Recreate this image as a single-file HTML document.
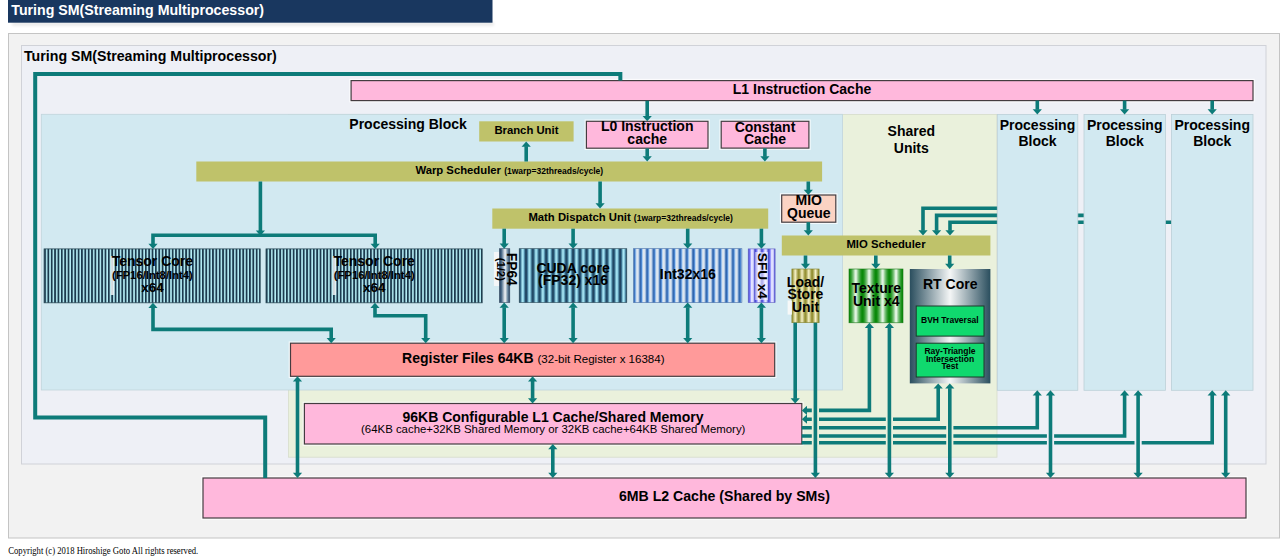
<!DOCTYPE html>
<html><head><meta charset="utf-8"><title>Turing SM</title>
<style>
html,body{margin:0;padding:0;background:#fff;width:1280px;height:558px;overflow:hidden;font-family:"Liberation Sans",sans-serif;}
svg{position:absolute;left:0;top:0;display:block;}
</style></head><body>
<svg width="1280" height="558" viewBox="0 0 1280 558">
<defs>
<pattern id="tensor" patternUnits="userSpaceOnUse" x="44.1" y="0" width="3.36" height="10">
  <rect width="3.36" height="10" fill="#b6eef6"/><rect width="1.8" height="10" fill="#1c3a4e"/>
</pattern>
<linearGradient id="fp64" x1="0" x2="1" y1="0" y2="0">
  <stop offset="0" stop-color="#1e3858"/><stop offset="0.2" stop-color="#4a6a88"/><stop offset="0.55" stop-color="#f4f6f8"/><stop offset="0.8" stop-color="#6a88a0"/><stop offset="1" stop-color="#1e3858"/>
</linearGradient>
<linearGradient id="cudaS" x1="0" x2="1" y1="0" y2="0">
  <stop offset="0" stop-color="#16304a"/><stop offset="0.2" stop-color="#336a8a"/><stop offset="0.45" stop-color="#aeecf8"/><stop offset="0.6" stop-color="#a0e2f2"/><stop offset="0.85" stop-color="#346c8c"/><stop offset="1" stop-color="#16304a"/>
</linearGradient>
<pattern id="cuda" patternUnits="userSpaceOnUse" x="519.2" y="0" width="6.725" height="10">
  <rect width="6.725" height="10" fill="url(#cudaS)"/>
</pattern>
<linearGradient id="intS" x1="0" x2="1" y1="0" y2="0">
  <stop offset="0" stop-color="#285aa0"/><stop offset="0.18" stop-color="#3a76c6"/><stop offset="0.3" stop-color="#80b8f4"/><stop offset="0.42" stop-color="#e0e8f0"/><stop offset="0.72" stop-color="#dde5ee"/><stop offset="0.86" stop-color="#7aa4d8"/><stop offset="1" stop-color="#285aa0"/>
</linearGradient>
<pattern id="int32" patternUnits="userSpaceOnUse" x="633.6" y="0" width="6.6" height="10">
  <rect width="6.6" height="10" fill="url(#intS)"/>
</pattern>
<linearGradient id="sfuS" x1="0" x2="1" y1="0" y2="0">
  <stop offset="0" stop-color="#3838b8"/><stop offset="0.2" stop-color="#6a6af0"/><stop offset="0.35" stop-color="#a0a0ff"/><stop offset="0.5" stop-color="#e8e8ff"/><stop offset="0.75" stop-color="#d8d8ff"/><stop offset="0.9" stop-color="#7a7ae8"/><stop offset="1" stop-color="#3838b8"/>
</linearGradient>
<pattern id="sfu" patternUnits="userSpaceOnUse" x="748.2" y="0" width="6.7" height="10">
  <rect width="6.7" height="10" fill="url(#sfuS)"/>
</pattern>
<linearGradient id="loadS" x1="0" x2="1" y1="0" y2="0">
  <stop offset="0" stop-color="#86821e"/><stop offset="0.5" stop-color="#f6f2c8"/><stop offset="1" stop-color="#86821e"/>
</linearGradient>
<pattern id="load" patternUnits="userSpaceOnUse" x="791.9" y="0" width="6.75" height="10">
  <rect width="6.75" height="10" fill="url(#loadS)"/>
</pattern>
<linearGradient id="texS" x1="0" x2="1" y1="0" y2="0">
  <stop offset="0" stop-color="#008400"/><stop offset="0.15" stop-color="#2a9a2a"/><stop offset="0.32" stop-color="#80c480"/><stop offset="0.5" stop-color="#f8fff8"/><stop offset="0.68" stop-color="#80c480"/><stop offset="0.85" stop-color="#2a9a2a"/><stop offset="1" stop-color="#008400"/>
</linearGradient>
<pattern id="tex" patternUnits="userSpaceOnUse" x="849" y="0" width="13.45" height="10">
  <rect width="13.45" height="10" fill="url(#texS)"/>
</pattern>
<linearGradient id="rt" x1="0" x2="1" y1="0" y2="0">
  <stop offset="0" stop-color="#2a4e5e"/><stop offset="0.5" stop-color="#f4f6f6"/><stop offset="1" stop-color="#2a4e5e"/>
</linearGradient>
<filter id="shadow" x="-5%" y="-50%" width="110%" height="200%"><feGaussianBlur stdDeviation="1.5"/></filter>
</defs>
<rect x="12" y="22" width="482" height="4" fill="#000" opacity="0.08" filter="url(#shadow)"/>
<rect x="8" y="0" width="484.50" height="22.70" fill="#19375f" />
<rect x="8.5" y="33.5" width="1271.00" height="504.50" fill="#f2f2f2" stroke="#c4c4c4" stroke-width="1" />
<rect x="21.5" y="45.5" width="1244.50" height="418.50" fill="#eef0f6" stroke="#d0d2d8" stroke-width="1" />
<rect x="288.5" y="114.4" width="708.50" height="342.80" fill="#eaf1dc" stroke="#d6dccb" stroke-width="0.8" />
<rect x="41.3" y="114.3" width="801.20" height="275.70" fill="#d2e9f1" stroke="#c0d4dc" stroke-width="0.8" />
<path d="M1060.00 208.30 L923.00 208.30 L923.00 230.70" fill="none" stroke="#0d7b79" stroke-width="3.6" stroke-linejoin="miter" stroke-linecap="butt"/>
<polygon points="918.40,230.20 927.60,230.20 923.00,235.40" fill="#0d7b79"/>
<path d="M1150.00 215.40 L936.60 215.40 L936.60 230.70" fill="none" stroke="#0d7b79" stroke-width="3.6" stroke-linejoin="miter" stroke-linecap="butt"/>
<polygon points="932.00,230.20 941.20,230.20 936.60,235.40" fill="#0d7b79"/>
<path d="M1240.00 222.30 L950.00 222.30 L950.00 230.70" fill="none" stroke="#0d7b79" stroke-width="3.6" stroke-linejoin="miter" stroke-linecap="butt"/>
<polygon points="945.40,230.20 954.60,230.20 950.00,235.40" fill="#0d7b79"/>
<rect x="997.3" y="114.4" width="80.50" height="275.90" fill="#d2e9f1" stroke="#bcd0d8" stroke-width="0.8" />
<rect x="1084" y="114.4" width="81.40" height="275.90" fill="#d2e9f1" stroke="#bcd0d8" stroke-width="0.8" />
<rect x="1171.4" y="114.4" width="81.60" height="275.90" fill="#d2e9f1" stroke="#bcd0d8" stroke-width="0.8" />
<rect x="351.1" y="80.6" width="901.90" height="20.00" fill="none" stroke="#fff" stroke-opacity="0.75" stroke-width="3.5999999999999996"/>
<rect x="351.1" y="80.6" width="901.90" height="20.00" fill="#ffb8dc" stroke="#443c40" stroke-width="1.2" />
<rect x="479.2" y="121.3" width="94.40" height="20.20" fill="#bfc26a" />
<rect x="586.4" y="121.3" width="121.60" height="26.90" fill="none" stroke="#fff" stroke-opacity="0.75" stroke-width="3.5999999999999996"/>
<rect x="586.4" y="121.3" width="121.60" height="26.90" fill="#ffb8dc" stroke="#443c40" stroke-width="1.2" />
<rect x="721.2" y="121.3" width="87.70" height="26.80" fill="none" stroke="#fff" stroke-opacity="0.75" stroke-width="3.5999999999999996"/>
<rect x="721.2" y="121.3" width="87.70" height="26.80" fill="#ffb8dc" stroke="#443c40" stroke-width="1.2" />
<rect x="196.3" y="161.5" width="625.80" height="20.00" fill="#bfc26a" />
<rect x="781.7" y="195" width="54.10" height="27.20" fill="none" stroke="#fff" stroke-opacity="0.75" stroke-width="3.5999999999999996"/>
<rect x="781.7" y="195" width="54.10" height="27.20" fill="#fbd3c3" stroke="#443c40" stroke-width="1.2" />
<rect x="492.3" y="208.5" width="275.90" height="20.20" fill="#bfc26a" />
<rect x="781.8" y="235.5" width="208.60" height="20.00" fill="#bfc26a" />
<rect x="44.1" y="248.9" width="216.10" height="53.90" fill="url(#tensor)" stroke="#2a4a58" stroke-width="0.8" />
<rect x="266" y="248.9" width="216.20" height="53.90" fill="url(#tensor)" stroke="#2a4a58" stroke-width="0.8" />
<rect x="493.9" y="252" width="5.60" height="34.00" fill="#f4f6f8" />
<rect x="499.4" y="248.7" width="10.40" height="53.90" fill="url(#fp64)" stroke="#3a5068" stroke-width="0.6" />
<rect x="519.2" y="248.7" width="107.60" height="53.90" fill="url(#cuda)" stroke="#2a4a58" stroke-width="0.6" />
<rect x="633.6" y="248.7" width="108.30" height="53.90" fill="url(#int32)" stroke="#4a70a8" stroke-width="0.6" />
<rect x="748.2" y="248.9" width="26.90" height="53.70" fill="url(#sfu)" stroke="#6060c0" stroke-width="0.6" />
<rect x="791.9" y="269" width="27.20" height="53.70" fill="url(#load)" stroke="#80802a" stroke-width="0.6" />
<rect x="849" y="269" width="54.00" height="53.80" fill="url(#tex)" stroke="#1a7a1a" stroke-width="0.6" />
<rect x="909.8" y="269" width="80.60" height="114.40" fill="url(#rt)" />
<rect x="110.7" y="256" width="3.50" height="39.00" fill="#f0f4f6" opacity="0.85"/>
<rect x="332.6" y="256" width="3.50" height="39.00" fill="#f0f4f6" opacity="0.85"/>
<rect x="755.2" y="252" width="12.80" height="48.00" fill="#ffffff" opacity="0.55"/>
<rect x="787.6" y="300.5" width="4.30" height="14.10" fill="#f6f8f8" />
<rect x="916.2" y="306" width="67.80" height="30.10" fill="#10d96e" stroke="#1a3a2a" stroke-width="1.0" />
<rect x="916.2" y="343.2" width="67.80" height="33.80" fill="#10d96e" stroke="#1a3a2a" stroke-width="1.0" />
<rect x="290.5" y="343.2" width="484.20" height="33.10" fill="none" stroke="#fff" stroke-opacity="0.75" stroke-width="3.5999999999999996"/>
<rect x="290.5" y="343.2" width="484.20" height="33.10" fill="#ff9a9a" stroke="#443c40" stroke-width="1.2" />
<rect x="304.4" y="403.5" width="497.40" height="40.50" fill="none" stroke="#fff" stroke-opacity="0.75" stroke-width="3.5999999999999996"/>
<rect x="304.4" y="403.5" width="497.40" height="40.50" fill="#ffb8dc" stroke="#443c40" stroke-width="1.2" />
<rect x="203" y="478" width="1043.00" height="40.00" fill="none" stroke="#fff" stroke-opacity="0.75" stroke-width="3.5999999999999996"/>
<rect x="203" y="478" width="1043.00" height="40.00" fill="#ffb8dc" stroke="#443c40" stroke-width="1.2" />
<path d="M265.20 478.00 L265.20 417.40 L35.20 417.40 L35.20 74.10 L620.35 74.10 L620.35 80.60" fill="none" stroke="#0d7b79" stroke-width="4.0" stroke-linejoin="miter" stroke-linecap="butt"/>
<path d="M647.20 100.80 L647.20 116.60" fill="none" stroke="#0d7b79" stroke-width="3.6" stroke-linejoin="miter" stroke-linecap="butt"/>
<polygon points="642.60,116.10 651.80,116.10 647.20,121.30" fill="#0d7b79"/>
<path d="M647.20 148.40 L647.20 156.80" fill="none" stroke="#0d7b79" stroke-width="3.6" stroke-linejoin="miter" stroke-linecap="butt"/>
<polygon points="642.60,156.30 651.80,156.30 647.20,161.50" fill="#0d7b79"/>
<path d="M764.90 148.30 L764.90 156.80" fill="none" stroke="#0d7b79" stroke-width="3.6" stroke-linejoin="miter" stroke-linecap="butt"/>
<polygon points="760.30,156.30 769.50,156.30 764.90,161.50" fill="#0d7b79"/>
<path d="M526.20 161.50 L526.20 146.20" fill="none" stroke="#0d7b79" stroke-width="3.6" stroke-linejoin="miter" stroke-linecap="butt"/>
<polygon points="521.60,146.70 530.80,146.70 526.20,141.50" fill="#0d7b79"/>
<path d="M808.30 181.50 L808.30 190.30" fill="none" stroke="#0d7b79" stroke-width="3.6" stroke-linejoin="miter" stroke-linecap="butt"/>
<polygon points="803.70,189.80 812.90,189.80 808.30,195.00" fill="#0d7b79"/>
<path d="M600.10 181.50 L600.10 203.80" fill="none" stroke="#0d7b79" stroke-width="3.6" stroke-linejoin="miter" stroke-linecap="butt"/>
<polygon points="595.50,203.30 604.70,203.30 600.10,208.50" fill="#0d7b79"/>
<path d="M260.40 181.50 L260.40 231.10" fill="none" stroke="#0d7b79" stroke-width="3.6" stroke-linejoin="miter" stroke-linecap="butt"/>
<polygon points="255.80,230.60 265.00,230.60 260.40,235.80" fill="#0d7b79"/>
<path d="M153.00 244.20 L153.00 235.30 L375.20 235.30 L375.20 244.20" fill="none" stroke="#0d7b79" stroke-width="3.6" stroke-linejoin="miter" stroke-linecap="butt"/>
<polygon points="148.40,243.70 157.60,243.70 153.00,248.90" fill="#0d7b79"/>
<polygon points="370.60,243.70 379.80,243.70 375.20,248.90" fill="#0d7b79"/>
<path d="M504.20 228.70 L504.20 244.00" fill="none" stroke="#0d7b79" stroke-width="3.6" stroke-linejoin="miter" stroke-linecap="butt"/>
<polygon points="499.60,243.50 508.80,243.50 504.20,248.70" fill="#0d7b79"/>
<path d="M504.20 307.30 L504.20 338.50" fill="none" stroke="#0d7b79" stroke-width="3.6" stroke-linejoin="miter" stroke-linecap="butt"/>
<polygon points="499.60,338.00 508.80,338.00 504.20,343.20" fill="#0d7b79"/>
<polygon points="499.60,307.80 508.80,307.80 504.20,302.60" fill="#0d7b79"/>
<path d="M573.10 228.70 L573.10 244.00" fill="none" stroke="#0d7b79" stroke-width="3.6" stroke-linejoin="miter" stroke-linecap="butt"/>
<polygon points="568.50,243.50 577.70,243.50 573.10,248.70" fill="#0d7b79"/>
<path d="M573.10 307.30 L573.10 338.50" fill="none" stroke="#0d7b79" stroke-width="3.6" stroke-linejoin="miter" stroke-linecap="butt"/>
<polygon points="568.50,338.00 577.70,338.00 573.10,343.20" fill="#0d7b79"/>
<polygon points="568.50,307.80 577.70,307.80 573.10,302.60" fill="#0d7b79"/>
<path d="M687.70 228.70 L687.70 244.00" fill="none" stroke="#0d7b79" stroke-width="3.6" stroke-linejoin="miter" stroke-linecap="butt"/>
<polygon points="683.10,243.50 692.30,243.50 687.70,248.70" fill="#0d7b79"/>
<path d="M687.70 307.30 L687.70 338.50" fill="none" stroke="#0d7b79" stroke-width="3.6" stroke-linejoin="miter" stroke-linecap="butt"/>
<polygon points="683.10,338.00 692.30,338.00 687.70,343.20" fill="#0d7b79"/>
<polygon points="683.10,307.80 692.30,307.80 687.70,302.60" fill="#0d7b79"/>
<path d="M761.40 228.70 L761.40 244.00" fill="none" stroke="#0d7b79" stroke-width="3.6" stroke-linejoin="miter" stroke-linecap="butt"/>
<polygon points="756.80,243.50 766.00,243.50 761.40,248.70" fill="#0d7b79"/>
<path d="M761.40 307.30 L761.40 338.50" fill="none" stroke="#0d7b79" stroke-width="3.6" stroke-linejoin="miter" stroke-linecap="butt"/>
<polygon points="756.80,338.00 766.00,338.00 761.40,343.20" fill="#0d7b79"/>
<polygon points="756.80,307.80 766.00,307.80 761.40,302.60" fill="#0d7b79"/>
<path d="M808.30 222.20 L808.30 230.80" fill="none" stroke="#0d7b79" stroke-width="3.6" stroke-linejoin="miter" stroke-linecap="butt"/>
<polygon points="803.70,230.30 812.90,230.30 808.30,235.50" fill="#0d7b79"/>
<path d="M805.50 255.50 L805.50 264.30" fill="none" stroke="#0d7b79" stroke-width="3.6" stroke-linejoin="miter" stroke-linecap="butt"/>
<polygon points="800.90,263.80 810.10,263.80 805.50,269.00" fill="#0d7b79"/>
<path d="M875.80 255.50 L875.80 264.30" fill="none" stroke="#0d7b79" stroke-width="3.6" stroke-linejoin="miter" stroke-linecap="butt"/>
<polygon points="871.20,263.80 880.40,263.80 875.80,269.00" fill="#0d7b79"/>
<path d="M949.70 255.50 L949.70 264.30" fill="none" stroke="#0d7b79" stroke-width="3.6" stroke-linejoin="miter" stroke-linecap="butt"/>
<polygon points="945.10,263.80 954.30,263.80 949.70,269.00" fill="#0d7b79"/>
<path d="M153.00 307.50 L153.00 329.40 L331.20 329.40 L331.20 338.50" fill="none" stroke="#0d7b79" stroke-width="3.6" stroke-linejoin="miter" stroke-linecap="butt"/>
<polygon points="326.60,338.00 335.80,338.00 331.20,343.20" fill="#0d7b79"/>
<polygon points="148.40,308.00 157.60,308.00 153.00,302.80" fill="#0d7b79"/>
<path d="M375.00 307.50 L375.00 315.80 L425.70 315.80 L425.70 338.50" fill="none" stroke="#0d7b79" stroke-width="3.6" stroke-linejoin="miter" stroke-linecap="butt"/>
<polygon points="421.10,338.00 430.30,338.00 425.70,343.20" fill="#0d7b79"/>
<polygon points="370.40,308.00 379.60,308.00 375.00,302.80" fill="#0d7b79"/>
<path d="M297.50 381.00 L297.50 473.30" fill="none" stroke="#0d7b79" stroke-width="3.6" stroke-linejoin="miter" stroke-linecap="butt"/>
<polygon points="292.90,472.80 302.10,472.80 297.50,478.00" fill="#0d7b79"/>
<polygon points="292.90,381.50 302.10,381.50 297.50,376.30" fill="#0d7b79"/>
<path d="M532.60 381.00 L532.60 398.80" fill="none" stroke="#0d7b79" stroke-width="3.6" stroke-linejoin="miter" stroke-linecap="butt"/>
<polygon points="528.00,398.30 537.20,398.30 532.60,403.50" fill="#0d7b79"/>
<polygon points="528.00,381.50 537.20,381.50 532.60,376.30" fill="#0d7b79"/>
<path d="M552.80 448.70 L552.80 473.30" fill="none" stroke="#0d7b79" stroke-width="3.6" stroke-linejoin="miter" stroke-linecap="butt"/>
<polygon points="548.20,472.80 557.40,472.80 552.80,478.00" fill="#0d7b79"/>
<polygon points="548.20,449.20 557.40,449.20 552.80,444.00" fill="#0d7b79"/>
<path d="M795.20 322.70 L795.20 398.80" fill="none" stroke="#0d7b79" stroke-width="3.6" stroke-linejoin="miter" stroke-linecap="butt"/>
<polygon points="790.60,398.30 799.80,398.30 795.20,403.50" fill="#0d7b79"/>
<path d="M869.40 327.50 L869.40 410.40 L806.50 410.40" fill="none" stroke="#0d7b79" stroke-width="3.6" stroke-linejoin="miter" stroke-linecap="butt"/>
<polygon points="807.00,405.80 807.00,415.00 801.80,410.40" fill="#0d7b79"/>
<polygon points="864.80,328.00 874.00,328.00 869.40,322.80" fill="#0d7b79"/>
<path d="M938.20 388.10 L938.20 419.20 L806.50 419.20" fill="none" stroke="#0d7b79" stroke-width="3.6" stroke-linejoin="miter" stroke-linecap="butt"/>
<polygon points="807.00,414.60 807.00,423.80 801.80,419.20" fill="#0d7b79"/>
<polygon points="933.60,388.60 942.80,388.60 938.20,383.40" fill="#0d7b79"/>
<path d="M801.80 427.80 L1037.30 427.80 L1037.30 395.00" fill="none" stroke="#0d7b79" stroke-width="3.6" stroke-linejoin="miter" stroke-linecap="butt"/>
<polygon points="1032.70,395.50 1041.90,395.50 1037.30,390.30" fill="#0d7b79"/>
<path d="M801.80 436.00 L1124.60 436.00 L1124.60 395.00" fill="none" stroke="#0d7b79" stroke-width="3.6" stroke-linejoin="miter" stroke-linecap="butt"/>
<polygon points="1120.00,395.50 1129.20,395.50 1124.60,390.30" fill="#0d7b79"/>
<path d="M801.80 442.70 L1212.20 442.70 L1212.20 395.00" fill="none" stroke="#0d7b79" stroke-width="3.6" stroke-linejoin="miter" stroke-linecap="butt"/>
<polygon points="1207.60,395.50 1216.80,395.50 1212.20,390.30" fill="#0d7b79"/>
<rect x="811.8" y="407.79999999999995" width="7.20" height="5.20" fill="#eaf1dc" />
<rect x="811.8" y="416.59999999999997" width="7.20" height="5.20" fill="#eaf1dc" />
<rect x="811.8" y="425.2" width="7.20" height="5.20" fill="#eaf1dc" />
<rect x="811.8" y="433.4" width="7.20" height="5.20" fill="#eaf1dc" />
<rect x="811.8" y="440.09999999999997" width="7.20" height="5.20" fill="#eaf1dc" />
<rect x="885.8" y="416.59999999999997" width="7.20" height="5.20" fill="#eaf1dc" />
<rect x="885.8" y="425.2" width="7.20" height="5.20" fill="#eaf1dc" />
<rect x="885.8" y="433.4" width="7.20" height="5.20" fill="#eaf1dc" />
<rect x="885.8" y="440.09999999999997" width="7.20" height="5.20" fill="#eaf1dc" />
<rect x="946.1999999999999" y="425.2" width="7.20" height="5.20" fill="#eaf1dc" />
<rect x="946.1999999999999" y="433.4" width="7.20" height="5.20" fill="#eaf1dc" />
<rect x="946.1999999999999" y="440.09999999999997" width="7.20" height="5.20" fill="#eaf1dc" />
<rect x="1046.9" y="433.4" width="7.20" height="5.20" fill="#eef0f6" />
<rect x="1046.9" y="440.09999999999997" width="7.20" height="5.20" fill="#eef0f6" />
<rect x="1134.5" y="440.09999999999997" width="7.20" height="5.20" fill="#eef0f6" />
<path d="M815.40 322.70 L815.40 473.30" fill="none" stroke="#0d7b79" stroke-width="3.6" stroke-linejoin="miter" stroke-linecap="butt"/>
<polygon points="810.80,472.80 820.00,472.80 815.40,478.00" fill="#0d7b79"/>
<path d="M889.40 327.50 L889.40 473.30" fill="none" stroke="#0d7b79" stroke-width="3.6" stroke-linejoin="miter" stroke-linecap="butt"/>
<polygon points="884.80,472.80 894.00,472.80 889.40,478.00" fill="#0d7b79"/>
<polygon points="884.80,328.00 894.00,328.00 889.40,322.80" fill="#0d7b79"/>
<path d="M949.80 388.10 L949.80 473.30" fill="none" stroke="#0d7b79" stroke-width="3.6" stroke-linejoin="miter" stroke-linecap="butt"/>
<polygon points="945.20,472.80 954.40,472.80 949.80,478.00" fill="#0d7b79"/>
<polygon points="945.20,388.60 954.40,388.60 949.80,383.40" fill="#0d7b79"/>
<path d="M1050.50 395.00 L1050.50 473.30" fill="none" stroke="#0d7b79" stroke-width="3.6" stroke-linejoin="miter" stroke-linecap="butt"/>
<polygon points="1045.90,472.80 1055.10,472.80 1050.50,478.00" fill="#0d7b79"/>
<polygon points="1045.90,395.50 1055.10,395.50 1050.50,390.30" fill="#0d7b79"/>
<path d="M1138.10 395.00 L1138.10 473.30" fill="none" stroke="#0d7b79" stroke-width="3.6" stroke-linejoin="miter" stroke-linecap="butt"/>
<polygon points="1133.50,472.80 1142.70,472.80 1138.10,478.00" fill="#0d7b79"/>
<polygon points="1133.50,395.50 1142.70,395.50 1138.10,390.30" fill="#0d7b79"/>
<path d="M1225.70 395.00 L1225.70 473.30" fill="none" stroke="#0d7b79" stroke-width="3.6" stroke-linejoin="miter" stroke-linecap="butt"/>
<polygon points="1221.10,472.80 1230.30,472.80 1225.70,478.00" fill="#0d7b79"/>
<polygon points="1221.10,395.50 1230.30,395.50 1225.70,390.30" fill="#0d7b79"/>
<path d="M1037.30 100.60 L1037.30 109.70" fill="none" stroke="#0d7b79" stroke-width="3.6" stroke-linejoin="miter" stroke-linecap="butt"/>
<polygon points="1032.70,109.20 1041.90,109.20 1037.30,114.40" fill="#0d7b79"/>
<path d="M1124.60 100.60 L1124.60 109.70" fill="none" stroke="#0d7b79" stroke-width="3.6" stroke-linejoin="miter" stroke-linecap="butt"/>
<polygon points="1120.00,109.20 1129.20,109.20 1124.60,114.40" fill="#0d7b79"/>
<path d="M1212.20 100.60 L1212.20 109.70" fill="none" stroke="#0d7b79" stroke-width="3.6" stroke-linejoin="miter" stroke-linecap="butt"/>
<polygon points="1207.60,109.20 1216.80,109.20 1212.20,114.40" fill="#0d7b79"/>
<text x="11.3" y="14.8" font-size="14.2" font-weight="bold" text-anchor="start" fill="#fff" font-family='"Liberation Sans", sans-serif' >Turing SM(Streaming Multiprocessor)</text>
<text x="24" y="61.2" font-size="14.2" font-weight="bold" text-anchor="start" fill="#000" font-family='"Liberation Sans", sans-serif' >Turing SM(Streaming Multiprocessor)</text>
<text x="802" y="94.1" font-size="14" font-weight="bold" text-anchor="middle" fill="#000" font-family='"Liberation Sans", sans-serif' >L1 Instruction Cache</text>
<text x="349.3" y="129" font-size="14" font-weight="bold" text-anchor="start" fill="#000" font-family='"Liberation Sans", sans-serif' >Processing Block</text>
<text x="526.4" y="133.5" font-size="11.3" font-weight="bold" text-anchor="middle" fill="#000" font-family='"Liberation Sans", sans-serif' >Branch Unit</text>
<text x="647.2" y="131.4" font-size="14" font-weight="bold" text-anchor="middle" fill="#000" font-family='"Liberation Sans", sans-serif' >L0 Instruction</text>
<text x="647.2" y="143.9" font-size="14" font-weight="bold" text-anchor="middle" fill="#000" font-family='"Liberation Sans", sans-serif' >cache</text>
<text x="765" y="131.5" font-size="14" font-weight="bold" text-anchor="middle" fill="#000" font-family='"Liberation Sans", sans-serif' >Constant</text>
<text x="765" y="143.9" font-size="14" font-weight="bold" text-anchor="middle" fill="#000" font-family='"Liberation Sans", sans-serif' >Cache</text>
<text x="911.3" y="136" font-size="14" font-weight="bold" text-anchor="middle" fill="#000" font-family='"Liberation Sans", sans-serif' >Shared</text>
<text x="911.3" y="152.9" font-size="14" font-weight="bold" text-anchor="middle" fill="#000" font-family='"Liberation Sans", sans-serif' >Units</text>
<text x="1037.5" y="129.9" font-size="14" font-weight="bold" text-anchor="middle" fill="#000" font-family='"Liberation Sans", sans-serif' >Processing</text>
<text x="1037.5" y="146.3" font-size="14" font-weight="bold" text-anchor="middle" fill="#000" font-family='"Liberation Sans", sans-serif' >Block</text>
<text x="1124.7" y="129.9" font-size="14" font-weight="bold" text-anchor="middle" fill="#000" font-family='"Liberation Sans", sans-serif' >Processing</text>
<text x="1124.7" y="146.3" font-size="14" font-weight="bold" text-anchor="middle" fill="#000" font-family='"Liberation Sans", sans-serif' >Block</text>
<text x="1212.2" y="129.9" font-size="14" font-weight="bold" text-anchor="middle" fill="#000" font-family='"Liberation Sans", sans-serif' >Processing</text>
<text x="1212.2" y="146.3" font-size="14" font-weight="bold" text-anchor="middle" fill="#000" font-family='"Liberation Sans", sans-serif' >Block</text>
<text x="415.4" y="174.3" font-family='"Liberation Sans", sans-serif' font-weight="bold" font-size="11.3">Warp Scheduler <tspan font-size="8.5">(1warp=32threads/cycle)</tspan></text>
<text x="808.8" y="205.1" font-size="14" font-weight="bold" text-anchor="middle" fill="#000" font-family='"Liberation Sans", sans-serif' >MIO</text>
<text x="808.8" y="217.7" font-size="14" font-weight="bold" text-anchor="middle" fill="#000" font-family='"Liberation Sans", sans-serif' >Queue</text>
<text x="528.4" y="221" font-family='"Liberation Sans", sans-serif' font-weight="bold" font-size="11.3">Math Dispatch Unit <tspan font-size="8.5">(1warp=32threads/cycle)</tspan></text>
<text x="886" y="248" font-size="11.3" font-weight="bold" text-anchor="middle" fill="#000" font-family='"Liberation Sans", sans-serif' >MIO Scheduler</text>
<text x="152.4" y="265.8" font-size="14" font-weight="bold" text-anchor="middle" fill="#000" font-family='"Liberation Sans", sans-serif' >Tensor Core</text>
<text x="152.4" y="279.2" font-size="11.3" font-weight="bold" text-anchor="middle" fill="#000" font-family='"Liberation Sans", sans-serif' >(FP16/Int8/Int4)</text>
<text x="152.4" y="291.8" font-size="13.5" font-weight="bold" text-anchor="middle" fill="#000" font-family='"Liberation Sans", sans-serif' >x64</text>
<text x="374.2" y="265.8" font-size="14" font-weight="bold" text-anchor="middle" fill="#000" font-family='"Liberation Sans", sans-serif' >Tensor Core</text>
<text x="374.2" y="279.2" font-size="11.3" font-weight="bold" text-anchor="middle" fill="#000" font-family='"Liberation Sans", sans-serif' >(FP16/Int8/Int4)</text>
<text x="374.2" y="291.8" font-size="13.5" font-weight="bold" text-anchor="middle" fill="#000" font-family='"Liberation Sans", sans-serif' >x64</text>
<text x="507.4" y="269.3" font-size="13.8" font-weight="bold" text-anchor="middle" fill="#000" font-family='"Liberation Sans", sans-serif' transform="rotate(90 507.4 269.3)">FP64</text>
<text x="497" y="269.3" font-size="11.3" font-weight="bold" text-anchor="middle" fill="#000" font-family='"Liberation Sans", sans-serif' transform="rotate(90 497 269.3)">(1/2)</text>
<text x="573.1" y="272.5" font-size="14" font-weight="bold" text-anchor="middle" fill="#000" font-family='"Liberation Sans", sans-serif' >CUDA core</text>
<text x="573.1" y="285.2" font-size="14" font-weight="bold" text-anchor="middle" fill="#000" font-family='"Liberation Sans", sans-serif' >(FP32) x16</text>
<text x="687.8" y="278.7" font-size="14" font-weight="bold" text-anchor="middle" fill="#000" font-family='"Liberation Sans", sans-serif' >Int32x16</text>
<text x="757.7" y="275.9" font-size="13.6" font-weight="bold" text-anchor="middle" fill="#000" font-family='"Liberation Sans", sans-serif' transform="rotate(90 757.7 275.9)">SFU x4</text>
<text x="805.5" y="286.5" font-size="14" font-weight="bold" text-anchor="middle" fill="#000" font-family='"Liberation Sans", sans-serif' >Load/</text>
<text x="805.5" y="299.4" font-size="14" font-weight="bold" text-anchor="middle" fill="#000" font-family='"Liberation Sans", sans-serif' >Store</text>
<text x="805.5" y="312.2" font-size="14" font-weight="bold" text-anchor="middle" fill="#000" font-family='"Liberation Sans", sans-serif' >Unit</text>
<text x="876.3" y="293.3" font-size="14" font-weight="bold" text-anchor="middle" fill="#000" font-family='"Liberation Sans", sans-serif' >Texture</text>
<text x="876.3" y="306.3" font-size="14" font-weight="bold" text-anchor="middle" fill="#000" font-family='"Liberation Sans", sans-serif' >Unit x4</text>
<text x="950.2" y="289.4" font-size="14" font-weight="bold" text-anchor="middle" fill="#000" font-family='"Liberation Sans", sans-serif' >RT Core</text>
<text x="949.9" y="323.1" font-size="8.5" font-weight="bold" text-anchor="middle" fill="#000" font-family='"Liberation Sans", sans-serif' >BVH Traversal</text>
<text x="950" y="354.4" font-size="8.5" font-weight="bold" text-anchor="middle" fill="#000" font-family='"Liberation Sans", sans-serif' >Ray-Triangle</text>
<text x="950" y="362" font-size="8.5" font-weight="bold" text-anchor="middle" fill="#000" font-family='"Liberation Sans", sans-serif' >Intersection</text>
<text x="950" y="369.4" font-size="8.5" font-weight="bold" text-anchor="middle" fill="#000" font-family='"Liberation Sans", sans-serif' >Test</text>
<text x="402.1" y="363.3" font-family='"Liberation Sans", sans-serif' font-weight="bold" font-size="14">Register Files 64KB <tspan font-weight="normal" font-size="11.55">(32-bit Register x 16384)</tspan></text>
<text x="553" y="421.7" font-size="14" font-weight="bold" text-anchor="middle" fill="#000" font-family='"Liberation Sans", sans-serif' >96KB Configurable L1 Cache/Shared Memory</text>
<text x="553.25" y="432.8" font-size="11.4" font-weight="normal" text-anchor="middle" fill="#000" font-family='"Liberation Sans", sans-serif' >(64KB cache+32KB Shared Memory or 32KB cache+64KB Shared Memory)</text>
<text x="724.4" y="501.2" font-size="14.12" font-weight="bold" text-anchor="middle" fill="#000" font-family='"Liberation Sans", sans-serif' >6MB L2 Cache (Shared by SMs)</text>
<text x="0" y="0" font-size="9.4" font-weight="normal" text-anchor="start" fill="#000" font-family='"Liberation Serif", serif' transform="translate(8.3 553.5) scale(0.92 1)">Copyright (c) 2018 Hiroshige Goto All rights reserved.</text>
</svg>
</body></html>
